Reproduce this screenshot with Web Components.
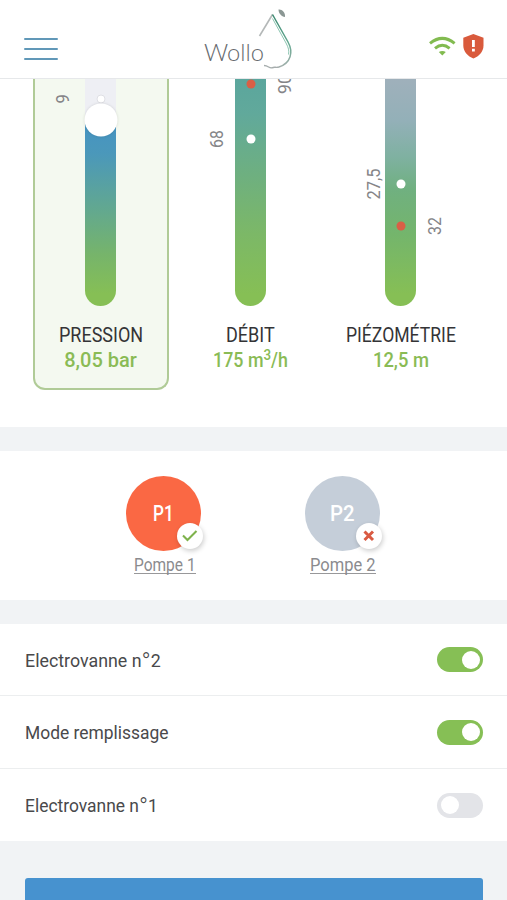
<!DOCTYPE html>
<html lang="fr">
<head>
<meta charset="utf-8">
<title>Wollo</title>
<style>
html,body{margin:0;height:100%;overflow:hidden}
body{font-family:Roboto,"Liberation Sans",sans-serif;background:#f1f3f5;color:#3a3a3c}
</style>
</head>
<body>
<wollo-app></wollo-app>
<script>
const define = (name, html, setup) => customElements.define(name, class extends HTMLElement {
  connectedCallback() {
    if (this.shadowRoot) return;
    this.attachShadow({ mode: 'open' }).innerHTML = typeof html === 'function' ? html(this) : html;
    if (setup) setup(this);
  }
});

/* Text condensed or widened horizontally to a given width. */
define('fit-text', el => `<style>
  :host{display:inline-block;width:${el.getAttribute('w')}px;white-space:nowrap;text-align:left}
  span{display:inline-block;transform-origin:0 50%}
  sup{font-size:15px;line-height:0;vertical-align:7px}
  b{font-weight:300;font-size:26px;line-height:0;vertical-align:-4px}
</style><span>${el.getAttribute('text')}</span>`, el => {
  const s = el.shadowRoot.querySelector('span');
  s.style.transform = `scaleX(${el.getAttribute('w') / s.offsetWidth})`;
});

define('wollo-logo', `<style>:host{display:block;width:92px;height:66px}svg{display:block}</style>
<svg width="92" height="66" viewBox="202 6 92 66" fill="none">
  <defs><linearGradient id="d" x1="0" y1="0" x2="0" y2="1"><stop offset="0" stop-color="#3c8a72"/><stop offset=".55" stop-color="#63a890"/><stop offset="1" stop-color="#a4b0ad"/></linearGradient></defs>
  <text x="204" y="60.500" font-family="Lato" font-weight="300" font-size="23.500" textLength="60" lengthAdjust="spacingAndGlyphs" fill="#666a6e">Wollo</text>
  <path d="M259.500 36 272.500 14.500" stroke="#b4b8b8" stroke-width="1.600"/>
  <path d="M272.500 14.500 288 42C293.500 52 291 63 279 67" stroke="url(#d)" stroke-width="1.500"/>
  <path d="M272.500 18.500 286 43C288.500 47.500 289.300 51 288.500 54.500" stroke="#8cc5b1" stroke-width="1"/>
  <path d="M279 67C276 68 274.500 66.500 272 67.800C269 68.600 268.500 65.500 264 65.500" stroke="#a6adad" stroke-width="1.400"/>
  <path d="M278.500 9.500C282 9 285.500 12.500 285 17C281.500 16.500 278.500 13.500 278.500 9.500Z" fill="#8b9794"/>
</svg>`);

define('status-icons', `<style>:host{display:block}svg{display:block}</style>
<svg width="56" height="28" viewBox="428 32 56 28">
  <g fill="none" stroke="#82bb50" stroke-width="3"><path d="M430 43.300Q442.300 33.500 454.600 43.300"/><path d="M435 48.300Q442.300 42.300 449.600 48.300"/></g>
  <path d="M438.800 52Q442.300 50 445.800 52L442.300 55.500Z" fill="#82bb50"/>
  <path d="M473.400 34 483.500 37.800V45.500C483.500 51.500 479 56.300 473.400 58.500C467.800 56.300 463.300 51.500 463.300 45.500V37.800Z" fill="#d95a3c"/>
  <path d="M472 40H474.800V47H472ZM472 48.800H474.800V51.500H472Z" fill="#fff"/>
</svg>`);

define('app-header', `<style>
  :host{display:flex;box-sizing:border-box;height:79px;background:#fff;border-bottom:1px solid #e6e8ea;align-items:flex-start;justify-content:space-between;padding:0 23px 0 24px}
  .menu{display:grid;gap:8px;width:34px;padding-top:38px}
  .menu i{height:2px;background:#6198b8;border-radius:1px}
  wollo-logo{margin:6px 12px 0 0}
  status-icons{margin-top:32px}
  .side{width:136px}.right{display:flex;justify-content:flex-end}
</style>
<div class="side"><div class="menu"><i></i><i></i><i></i></div></div>
<wollo-logo></wollo-logo>
<div class="side right"><status-icons></status-icons></div>`);

define('level-gauge', el => `<style>
  :host{display:flex;flex-direction:column;align-items:center;box-sizing:border-box;height:311px;border:2px solid transparent;border-top:0;border-radius:0 0 12px 12px}
  :host([selected]){background:#f4f9f0;border-color:#b0cb97}
  .bar{position:relative;flex:none;width:31px;height:227px;border-radius:0 0 16px 16px;background:${el.getAttribute('fill')}}
  .name{margin:18px 0 0 0;font-size:19.500px;line-height:23px;height:23px;color:#343436}
  .value{margin:1px 0 0 0;font-size:20px;line-height:24px;height:24px;font-weight:500;color:#8abb55}
  ::slotted(*){position:absolute}
</style><div class="bar"><slot></slot></div>
<fit-text class="name" w="${el.getAttribute('nw')}" text="${el.getAttribute('name')}"></fit-text>
<fit-text class="value" w="${el.getAttribute('vw')}" text="${el.getAttribute('value')}"></fit-text>`);

define('gauge-dot', `<style>
  :host{left:50%;width:9px;height:9px;border-radius:50%;background:#fff;transform:translate(-50%,-50%)}
  :host([alert]){background:#d95f46}
  :host([ring]){box-sizing:border-box;border:1.5px solid #dfe0e5}
  :host([knob]){width:33px;height:33px;box-shadow:0 0 3px #0002}
</style>`);

define('gauge-label', el => `<style>
  :host{width:0;height:0;display:flex;align-items:center;justify-content:center;font-size:18.500px;line-height:20px;color:#858588}
  div{flex:none;transform:rotate(-90deg)}
  fit-text{display:block}
</style><div><fit-text w="${el.getAttribute('w')}" text="${el.getAttribute('text')}"></fit-text></div>`);

define('gauge-panel', `<style>
  :host{display:grid;grid-template-columns:repeat(3,135.500px);gap:14.500px;padding-left:33px;height:348px;background:#fff;overflow:hidden}
</style>
<level-gauge selected name="PRESSION" nw="84" value="8,05 bar" vw="73" fill="linear-gradient(#eeeff4 41px,#4593c3 41px,#4b98ba 75px,#62a890 130px,#76b46b 175px,#86bf55 215px)">
  <gauge-dot ring style="top:19.500px"></gauge-dot><gauge-dot knob style="top:41px"></gauge-dot>
  <gauge-label w="9" text="9" style="left:-22.500px;top:19.500px"></gauge-label>
</level-gauge>
<level-gauge name="DÉBIT" nw="49" value="175 m<sup>3</sup>/h" vw="75" fill="linear-gradient(#5ba69d,#61a99b 35px,#6fb07e 100px,#7cb867 155px,#86bf55 215px)">
  <gauge-dot alert style="top:5px"></gauge-dot><gauge-dot style="top:60px"></gauge-dot>
  <gauge-label w="18" text="68" style="left:-18px;top:60px"></gauge-label>
  <gauge-label w="20" text="90" style="left:50px;top:5px"></gauge-label>
</level-gauge>
<level-gauge name="PIÉZOMÉTRIE" nw="110" value="12,5 m" vw="56" fill="linear-gradient(#9fb0bb,#93b0b8 42px,#7fb1a1 78px,#70b080 110px,#74b56c 155px,#86bf55 215px)">
  <gauge-dot style="top:105px"></gauge-dot><gauge-dot alert style="top:147px"></gauge-dot>
  <gauge-label w="31" text="27,5" style="left:-11.500px;top:105px"></gauge-label>
  <gauge-label w="18" text="32" style="left:50px;top:147px"></gauge-label>
</level-gauge>`);

define('pump-button', el => `<style>
  :host{display:flex;flex-direction:column;align-items:center;width:75px}
  .disc{position:relative;width:75px;height:75px;border-radius:50%;background:${el.getAttribute('color')};display:flex;align-items:center;justify-content:center;color:#fff;font-size:22px;font-weight:500}
  .badge{position:absolute;right:-2px;bottom:2.500px;width:26px;height:26px;border-radius:50%;background:#fff;box-shadow:1px 2px 5px #0003}
  .badge svg{display:block}
  .label{margin:3.500px 0 0 2px;font-size:18.500px;line-height:21px;color:#8b8b8e;border-bottom:1px solid #98989a;height:18.500px}
</style>
<div class="disc"><fit-text w="${el.getAttribute('cw')}" text="${el.getAttribute('code')}"></fit-text>
<div class="badge"><svg width="26" height="26" viewBox="0 0 26 26" fill="none" stroke-width="${el.hasAttribute('on') ? 2.1 : 3}" stroke="${el.hasAttribute('on') ? '#7eb24c' : '#d95a42'}"><path d="${el.hasAttribute('on') ? 'M6 12.500 10.500 17 19.500 8' : 'M8.500 8.500 17 17M17 8.500 8.500 17'}"/></svg></div></div>
<fit-text class="label" w="${el.getAttribute('lw')}" text="${el.getAttribute('label')}"></fit-text>`);

define('pump-panel', `<style>:host{display:flex;gap:103.500px;box-sizing:border-box;height:149px;margin-top:24px;padding:25px 0 0 126px;background:#fff}</style>
<pump-button on color="#fa6844" code="P1" cw="21" label="Pompe 1" lw="62"></pump-button>
<pump-button color="#c5ced9" code="P2" cw="25" label="Pompe 2" lw="66"></pump-button>`);

define('toggle-switch', `<style>
  :host{display:flex;box-sizing:border-box;width:46px;height:25px;padding:3.500px;border-radius:13px;background:#e3e4e8}
  :host([on]){background:#86bf55;justify-content:flex-end}
  i{width:18px;height:18px;border-radius:50%;background:#fff}
</style><i></i>`);

define('setting-row', `<style>
  :host{display:flex;align-items:center;justify-content:space-between;box-sizing:border-box;padding:0 24px 0 25px;background:#fff;font-size:19px;color:#49494b}
  ::slotted(fit-text){padding-top:1px}
</style><slot></slot>`);

define('settings-list', `<style>
  :host{display:grid;grid-template-rows:71px 72px 72px;gap:1px;margin-top:24px;height:217px;background:#eceeef}
</style>
<setting-row><fit-text w="136" text="Electrovanne n<b>°</b>2"></fit-text><toggle-switch on></toggle-switch></setting-row>
<setting-row><fit-text w="144" text="Mode remplissage"></fit-text><toggle-switch on></toggle-switch></setting-row>
<setting-row><fit-text w="133" text="Electrovanne n<b>°</b>1"></fit-text><toggle-switch></toggle-switch></setting-row>`);

define('primary-action', `<style>:host{display:block;height:60px;margin:37px 24px 0 25px;border-radius:3px;background:#4792cf}</style>`);

define('wollo-app', `<style>:host{display:block;width:507px;height:900px;overflow:hidden}</style>
<app-header></app-header><gauge-panel></gauge-panel><pump-panel></pump-panel><settings-list></settings-list><primary-action></primary-action>`);
</script>
</body>
</html>
